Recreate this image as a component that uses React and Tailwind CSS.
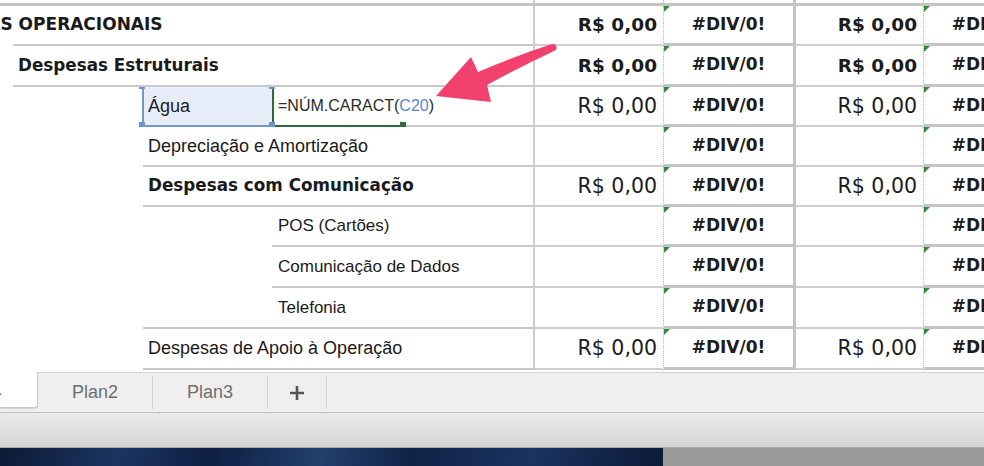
import React from "react";

const bold = "font-['DejaVu_Sans',Verdana,sans-serif] font-bold";
const arial = "font-['Liberation_Sans',Arial,sans-serif]";
const rsBold = `${bold} text-[18.5px]`;
const rsRegular = "font-['DejaVu_Sans',Verdana,sans-serif] text-[20.5px]";

// linhas da planilha (altura, recuo da linha de grade, rótulo)
const rows = [
  { h: "h-[40px]", line: "ml-[13px]", label: "DESPESAS OPERACIONAIS", cls: `${bold} text-[17px] -ml-[87px]`, rs: rsBold },
  { h: "h-[41px]", line: "ml-[13px]", label: "Despesas Estruturais", cls: `${bold} text-[16.8px] ml-[18px]`, rs: rsBold },
  { h: "h-[40px]", line: "ml-[143px]", label: "Água", selected: true, rs: rsRegular },
  { h: "h-[40px]", line: "ml-[143px]", label: "Depreciação e Amortização", cls: `${arial} text-[18px] ml-[148px]` },
  { h: "h-[40px]", line: "ml-[143px]", label: "Despesas com Comunicação", cls: `${bold} text-[16.8px] ml-[148px]`, rs: rsRegular },
  { h: "h-[40px]", line: "ml-[272px]", label: "POS (Cartões)", cls: `${arial} text-[17px] ml-[278px]` },
  { h: "h-[41px]", line: "ml-[272px]", label: "Comunicação de Dados", cls: `${arial} text-[17px] ml-[278px]` },
  { h: "h-[41px]", line: "ml-[143px]", label: "Telefonia", cls: `${arial} text-[17px] ml-[278px]` },
  { h: "h-[41px]", line: "ml-[143px]", label: "Despesas de Apoio à Operação", cls: `${arial} text-[18px] ml-[148px]`, rs: rsRegular },
];

const RsCell = ({ cls, value, thick }) => (
  <div className={`w-[130px] shrink-0 flex flex-col ${thick ? "border-l-[3px] border-[#c4c4c4]" : "border-l-2 border-[#cdcdcd]"}`}>
    <div className="flex-1 flex items-center justify-end pr-[6px] text-[#1c1c1c] whitespace-nowrap">
      {value && <span className={cls}>R$ 0,00</span>}
    </div>
    <div className="h-[2px] bg-[#cfcfcf]" />
  </div>
);

const DivCell = () => (
  <div className="relative w-[130px] shrink-0 flex flex-col border-l border-dotted border-[#b5b5b5]">
    <div className="absolute top-0 left-0 w-0 h-0 border-t-[6px] border-t-[#2f8a3a] border-r-[6px] border-r-transparent" />
    <div className={`flex-1 flex items-center justify-center text-[17px] text-[#1c1c1c] ${bold}`}>#DIV/0!</div>
    <div className="h-[3px] bg-[#c4c4c4]" />
  </div>
);

const Handle = ({ cls }) => <div className={`absolute w-[6px] h-[6px] ${cls}`} />;

const SelectedLabel = () => (
  <div className="relative flex-1">
    {/* célula selecionada */}
    <div className="absolute top-[-2px] left-[142px] w-[130px] h-[42px] border-l-2 border-t-2 border-b-2 border-[#7197d3] bg-[#e8eef9] flex items-center pl-[4px]">
      <span className={`${arial} text-[18px] text-[#1c1c1c]`}>Água</span>
    </div>
    {/* célula em edição */}
    <div className="absolute top-[-2px] left-[272px] w-[134px] h-[42px] border-2 border-r-0 border-[#2e6a3c] flex items-center pl-[4px] whitespace-nowrap">
      <span className={`${arial} text-[16px] text-[#2a2a2a]`}>
        =NÚM.CARACT(<span className="text-[#5a86cc]">C20</span>)
      </span>
    </div>
    <Handle cls="left-[139px] top-[-4px] bg-[#6b93d6]" />
    <Handle cls="left-[269px] top-[-4px] bg-[#6b93d6]" />
    <Handle cls="left-[139px] top-[35px] bg-[#6b93d6]" />
    <Handle cls="left-[269px] top-[35px] bg-[#6b93d6]" />
    <Handle cls="left-[400px] top-[35px] bg-[#2e6a3c]" />
  </div>
);

const Row = ({ row }) => (
  <div className={`flex ${row.h}`}>
    <div className="w-[533px] shrink-0 flex flex-col overflow-hidden">
      {row.selected ? (
        <SelectedLabel />
      ) : (
        <div className="flex-1 flex items-center whitespace-nowrap text-[#1a1a1a]">
          <span className={`shrink-0 ${row.cls}`}>{row.label}</span>
        </div>
      )}
      <div className={`h-[2px] bg-[#c9c9c9] ${row.line}`} />
    </div>
    <RsCell cls={row.rs} value={!!row.rs} />
    <DivCell />
    <RsCell cls={row.rs} value={!!row.rs} thick />
    <DivCell />
  </div>
);

export default function App() {
  return (
    <div className="relative w-[984px] h-[466px] overflow-hidden bg-white flex flex-col">
      {/* sobra da linha anterior */}
      <div className="flex h-[3px]">
        <div className="w-[533px] shrink-0" />
        <div className="w-[130px] shrink-0 border-l-2 border-[#cdcdcd]" />
        <div className="w-[130px] shrink-0 border-l border-dotted border-[#b5b5b5]" />
        <div className="w-[130px] shrink-0 border-l-[3px] border-[#c4c4c4]" />
        <div className="w-[130px] shrink-0 border-l border-dotted border-[#b5b5b5]" />
      </div>
      <div className="h-[3px] bg-[#c4c4c4]" />

      {rows.map((row) => (
        <Row key={row.label} row={row} />
      ))}

      <div className="h-[2px]" />

      {/* abas das planilhas */}
      <div className={`flex h-[41px] bg-[#efefef] border-t border-[#d3d3d3] border-b border-b-[#bdbdbd] ${arial} text-[18px] text-[#6e6e6e]`}>
        <div className="w-[38px] h-[36px] -mt-px bg-white border-r border-b border-[#c9c9c9] rounded-br-[4px] shadow-[0_1px_1px_rgba(0,0,0,0.12)] flex items-center justify-end pr-[35px] overflow-hidden">
          <span className="shrink-0">Plan1</span>
        </div>
        <div className="w-[114px] flex items-center justify-center">Plan2</div>
        <div className="w-px bg-[#d4d4d4] my-[3px]" />
        <div className="w-[114px] flex items-center justify-center">Plan3</div>
        <div className="w-px bg-[#d4d4d4] my-[3px]" />
        <div className="w-[58px] flex items-center justify-center">
          <svg width="16" height="16" viewBox="0 0 16 16">
            <path d="M8 1v14M1 8h14" stroke="#555" strokeWidth="2.6" />
          </svg>
        </div>
        <div className="w-px bg-[#d4d4d4] my-[3px]" />
      </div>

      {/* barra de status */}
      <div className="h-[35px] bg-gradient-to-b from-[#ebebeb] to-[#d5d5d5] border-b border-[#a8a8a8]" />

      {/* área de trabalho */}
      <div className="flex-1 flex">
        <div className="w-[663px] bg-[linear-gradient(100deg,#0c1a36_0%,#1b3561_18%,#0e1f43_32%,#22406e_48%,#102348_62%,#1a3360_80%,#0b1a38_100%)]" />
        <div className="flex-1 bg-[#9b9b9b]" />
      </div>

      {/* seta */}
      <svg className="absolute left-[430px] top-[40px]" width="130" height="66" viewBox="430 40 130 66">
        <path
          d="M436 96 L471 57 L478 72 Q515 56 552 44 Q558 44 556 50 Q520 67 487 85 L491 102 Z"
          fill="#f2406f"
        />
      </svg>
    </div>
  );
}
